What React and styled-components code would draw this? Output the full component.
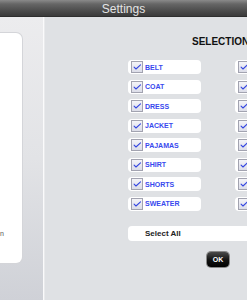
import React from 'react'
import styled, { createGlobalStyle } from 'styled-components'

const GlobalStyle = createGlobalStyle`
  html, body {
    margin: 0;
    padding: 0;
    background: #dfe1e4;
  }
  body {
    font-family: "Liberation Sans", Arial, sans-serif;
  }
`

const items = ['BELT', 'COAT', 'DRESS', 'JACKET', 'PAJAMAS', 'SHIRT', 'SHORTS', 'SWEATER']
const itemsRight = ['SHOES', 'SKIRT', 'SOCKS', 'SUIT', 'SWIMSUIT', 'TIE', 'TOP', 'VEST']

function Check() {
  return (
    <Box>
      <svg width="12" height="12" viewBox="0 0 12 12">
        <path d="M2.5 6.2 L4.8 8.4 L10.2 3.4" fill="none" stroke="#3446e0" strokeWidth="1.3" strokeLinecap="round" strokeLinejoin="round" />
      </svg>
    </Box>
  )
}

function App() {
  return (
    <Screen>
      <GlobalStyle />
      <TitleBar>Settings</TitleBar>
      <Body>
        <Side>
          <Card>
            <CardText>n</CardText>
          </Card>
        </Side>
        <Divider />
        <Content>
          <Heading>SELECTIONS</Heading>
          <Grid>
            {items.map((item, i) => (
              <React.Fragment key={item}>
                <Row>
                  <Check />
                  <Label>{item}</Label>
                </Row>
                <Row>
                  <Check />
                  <Label>{itemsRight[i]}</Label>
                </Row>
              </React.Fragment>
            ))}
          </Grid>
          <SelectAll>Select All</SelectAll>
          <ButtonRow>
            <OkButton>OK</OkButton>
          </ButtonRow>
        </Content>
      </Body>
    </Screen>
  )
}

const Screen = styled.div`
  width: 247px;
  height: 300px;
  overflow: hidden;
  display: flex;
  flex-direction: column;
  background: #dfe1e4;
`

const TitleBar = styled.div`
  height: 17px;
  flex: none;
  display: flex;
  align-items: center;
  justify-content: center;
  background: linear-gradient(180deg, #8a8a8a 0%, #666 25%, #4a4a4a 70%, #3a3a3a 100%);
  border-bottom: 1px solid #2e2e2e;
  box-sizing: border-box;
  color: #e4e4e4;
  font-size: 12px;
  padding-top: 1px;
`

const Body = styled.div`
  flex: 1;
  display: flex;
  min-height: 0;
`

const Side = styled.div`
  width: 43px;
  flex: none;
  background: linear-gradient(180deg, #ececee 0%, #e2e3e6 50%, #cfd1d7 100%);
  padding-top: 16px;
  box-sizing: border-box;
`

const Card = styled.div`
  width: 22px;
  height: 230px;
  background: #fff;
  border-radius: 0 6px 6px 0;
  box-shadow: 0 0 0 1px #d4d5d9;
  display: flex;
  align-items: flex-end;
  padding-bottom: 26px;
  box-sizing: border-box;
`

const CardText = styled.span`
  font-size: 7px;
  color: #555;
`

const Divider = styled.div`
  width: 2px;
  flex: none;
  background: linear-gradient(90deg, #fafafb 0 1px, #e9eaec 1px 2px);
`

const Content = styled.div`
  flex: none;
  width: 320px;
  padding-left: 83px;
  box-sizing: border-box;
`

const Heading = styled.div`
  font-size: 10px;
  font-weight: bold;
  color: #111;
  padding-left: 64px;
  margin-top: 19px;
  height: 12px;
  line-height: 12px;
`

const Grid = styled.div`
  display: grid;
  grid-template-columns: 73px 73px;
  column-gap: 34px;
  row-gap: 5.5px;
  margin-top: 12px;
`

const Row = styled.div`
  height: 14px;
  background: #fff;
  border-radius: 4px;
  display: flex;
  align-items: center;
  padding-left: 3px;
`

const Box = styled.div`
  width: 12px;
  height: 12px;
  box-sizing: border-box;
  border: 1px solid #a2a3b0;
  background: linear-gradient(180deg, #f4f4f8, #dcdde8);
  display: flex;
  align-items: center;
  justify-content: center;
  svg {
    display: block;
  }
`

const Label = styled.span`
  font-size: 7px;
  font-weight: bold;
  color: #3849ee;
  margin-left: 2px;
`

const SelectAll = styled.div`
  margin-top: 15px;
  height: 15px;
  width: 200px;
  background: #fff;
  border-radius: 4px;
  display: flex;
  align-items: center;
  padding-left: 17px;
  box-sizing: border-box;
  font-size: 8px;
  font-weight: bold;
  color: #222;
`

const ButtonRow = styled.div`
  padding-left: 79px;
  margin-top: 11px;
`

const OkButton = styled.div`
  width: 22px;
  height: 15px;
  border-radius: 4px;
  background: linear-gradient(180deg, #4a4a4a 0%, #111 55%, #000 100%);
  box-shadow: 0 0 0 1px #888;
  color: #fff;
  font-size: 7px;
  font-weight: bold;
  display: flex;
  align-items: center;
  justify-content: center;
`

export default App
